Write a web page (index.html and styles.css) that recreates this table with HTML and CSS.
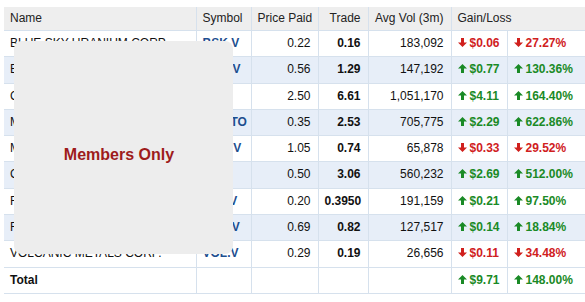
FILE: index.html
```html
<!DOCTYPE html>
<html>
<head>
<meta charset="utf-8">
<link rel="stylesheet" href="styles.css">
</head>
<body>
<div class="wrap">
  <table class="port">
    <colgroup>
      <col class="c-name"><col class="c-sym"><col class="c-paid"><col class="c-trade"><col class="c-vol"><col class="c-gain"><col class="c-loss">
    </colgroup>
    <thead>
      <tr>
        <th class="first">Name</th>
        <th>Symbol</th>
        <th class="num">Price Paid</th>
        <th class="num">Trade</th>
        <th class="num">Avg Vol (3m)</th>
        <th colspan="2" class="last">Gain/Loss</th>
      </tr>
    </thead>
    <tbody>
      <tr>
        <td class="first">BLUE SKY URANIUM CORP</td><td class="sym">BSK.V</td><td class="num">0.22</td><td class="num b">0.16</td><td class="num">183,092</td>
        <td class="dn"><svg class="arr" viewBox="0 0 9 9"><path d="M4.5 9L9 4.5H6V0H3V4.5H0Z"/></svg>$0.06</td>
        <td class="dn last"><svg class="arr" viewBox="0 0 9 9"><path d="M4.5 9L9 4.5H6V0H3V4.5H0Z"/></svg>27.27%</td>
      </tr>
      <tr class="alt">
        <td class="first">BRIGADIER GOLD LTD</td><td class="sym">BRG.V</td><td class="num">0.56</td><td class="num b">1.29</td><td class="num">147,192</td>
        <td class="up"><svg class="arr" viewBox="0 0 9 9"><path d="M4.5 0L9 4.5H6V9H3V4.5H0Z"/></svg>$0.77</td>
        <td class="up last"><svg class="arr" viewBox="0 0 9 9"><path d="M4.5 0L9 4.5H6V9H3V4.5H0Z"/></svg>130.36%</td>
      </tr>
      <tr>
        <td class="first">CANADA COPPER CORP</td><td class="sym">CCC</td><td class="num">2.50</td><td class="num b">6.61</td><td class="num">1,051,170</td>
        <td class="up"><svg class="arr" viewBox="0 0 9 9"><path d="M4.5 0L9 4.5H6V9H3V4.5H0Z"/></svg>$4.11</td>
        <td class="up last"><svg class="arr" viewBox="0 0 9 9"><path d="M4.5 0L9 4.5H6V9H3V4.5H0Z"/></svg>164.40%</td>
      </tr>
      <tr class="alt">
        <td class="first">MAXIMUS MINING INC</td><td class="sym">MXMTO</td><td class="num">0.35</td><td class="num b">2.53</td><td class="num">705,775</td>
        <td class="up"><svg class="arr" viewBox="0 0 9 9"><path d="M4.5 0L9 4.5H6V9H3V4.5H0Z"/></svg>$2.29</td>
        <td class="up last"><svg class="arr" viewBox="0 0 9 9"><path d="M4.5 0L9 4.5H6V9H3V4.5H0Z"/></svg>622.86%</td>
      </tr>
      <tr>
        <td class="first">MONARCH METALS CORP</td><td class="sym">MNR.V</td><td class="num">1.05</td><td class="num b">0.74</td><td class="num">65,878</td>
        <td class="dn"><svg class="arr" viewBox="0 0 9 9"><path d="M4.5 9L9 4.5H6V0H3V4.5H0Z"/></svg>$0.33</td>
        <td class="dn last"><svg class="arr" viewBox="0 0 9 9"><path d="M4.5 9L9 4.5H6V0H3V4.5H0Z"/></svg>29.52%</td>
      </tr>
      <tr class="alt">
        <td class="first">CORVUS ENERGY INC</td><td class="sym">CVE</td><td class="num">0.50</td><td class="num b">3.06</td><td class="num">560,232</td>
        <td class="up"><svg class="arr" viewBox="0 0 9 9"><path d="M4.5 0L9 4.5H6V9H3V4.5H0Z"/></svg>$2.69</td>
        <td class="up last"><svg class="arr" viewBox="0 0 9 9"><path d="M4.5 0L9 4.5H6V9H3V4.5H0Z"/></svg>512.00%</td>
      </tr>
      <tr>
        <td class="first">FALCON RESOURCES LTD</td><td class="sym">FLR.V</td><td class="num">0.20</td><td class="num b">0.3950</td><td class="num">191,159</td>
        <td class="up"><svg class="arr" viewBox="0 0 9 9"><path d="M4.5 0L9 4.5H6V9H3V4.5H0Z"/></svg>$0.21</td>
        <td class="up last"><svg class="arr" viewBox="0 0 9 9"><path d="M4.5 0L9 4.5H6V9H3V4.5H0Z"/></svg>97.50%</td>
      </tr>
      <tr class="alt">
        <td class="first">FORTUNE BAY MINERALS</td><td class="sym">FBM.V</td><td class="num">0.69</td><td class="num b">0.82</td><td class="num">127,517</td>
        <td class="up"><svg class="arr" viewBox="0 0 9 9"><path d="M4.5 0L9 4.5H6V9H3V4.5H0Z"/></svg>$0.14</td>
        <td class="up last"><svg class="arr" viewBox="0 0 9 9"><path d="M4.5 0L9 4.5H6V9H3V4.5H0Z"/></svg>18.84%</td>
      </tr>
      <tr>
        <td class="first">VOLCANIC METALS CORP.</td><td class="sym">VOL.V</td><td class="num">0.29</td><td class="num b">0.19</td><td class="num">26,656</td>
        <td class="dn"><svg class="arr" viewBox="0 0 9 9"><path d="M4.5 9L9 4.5H6V0H3V4.5H0Z"/></svg>$0.11</td>
        <td class="dn last"><svg class="arr" viewBox="0 0 9 9"><path d="M4.5 9L9 4.5H6V0H3V4.5H0Z"/></svg>34.48%</td>
      </tr>
      <tr>
        <td class="first b">Total</td><td></td><td></td><td></td><td></td>
        <td class="up"><svg class="arr" viewBox="0 0 9 9"><path d="M4.5 0L9 4.5H6V9H3V4.5H0Z"/></svg>$9.71</td>
        <td class="up last"><svg class="arr" viewBox="0 0 9 9"><path d="M4.5 0L9 4.5H6V9H3V4.5H0Z"/></svg>148.00%</td>
      </tr>
    </tbody>
  </table>
  <div class="members">Members Only</div>
</div>
</body>
</html>
```
FILE: styles.css
```css
html, body {
  margin: 0;
  padding: 0;
  background: #fff;
  overflow: hidden;
}
.wrap {
  position: relative;
  padding: 7px 0 0 4px;
}
.port {
  border-collapse: collapse;
  table-layout: fixed;
  width: 600px;
  font-family: "Liberation Sans", Arial, sans-serif;
  font-size: 12px;
  color: #111;
}
.c-name { width: 192px; }
.c-sym { width: 55px; }
.c-paid { width: 67px; }
.c-trade { width: 50px; }
.c-vol { width: 83px; }
.c-gain { width: 56px; }
.c-loss { width: 97px; }
.port th, .port td {
  border: 1px solid #d6e1ed;
  padding: 5px 7px 5px 6px;
  line-height: 15.3px;
  white-space: nowrap;
  overflow: hidden;
  text-align: left;
}
.port th {
  background: #eeeeee;
  font-weight: normal;
  color: #222;
  border-top: none;
  padding-top: 4px;
  padding-bottom: 4px;
  line-height: 15px;
}
.port .first { border-left: none; }
.port .last { border-right: none; }
.port .num { text-align: right; }
.port .b { font-weight: bold; }
.port .alt td { background: #e7eef8; }
.port .sym {
  color: #1d4e8f;
  font-weight: bold;
}
.port .up { color: #1a8a26; font-weight: bold; }
.port .dn { color: #d0201d; font-weight: bold; }
.arr {
  width: 9px;
  height: 9px;
  margin-right: 3px;
  vertical-align: 0;
  fill: currentColor;
}
.members {
  position: absolute;
  left: 14px;
  top: 41px;
  width: 219px;
  height: 213px;
  border-radius: 8px;
  background: #ededed;
  display: flex;
  align-items: center;
  justify-content: center;
  padding: 14px 9px 0 0;
  box-sizing: border-box;
  font-family: "Liberation Sans", Arial, sans-serif;
  font-size: 16px;
  font-weight: bold;
  color: #9e1b1b;
}
```
